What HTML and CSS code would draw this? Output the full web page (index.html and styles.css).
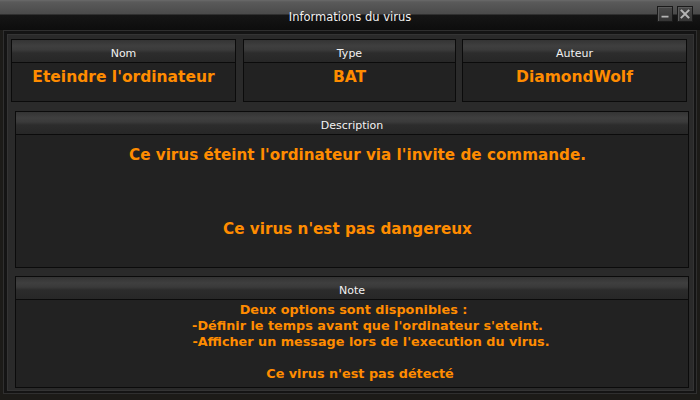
FILE: index.html
```html
<!DOCTYPE html>
<html lang="fr">
<head>
<meta charset="utf-8">
<title>Informations du virus</title>
<link rel="stylesheet" href="styles.css">
</head>
<body>
<div class="window">
  <div class="titlebar">
    <div class="spacer"></div>
    <div class="title">Informations du virus</div>
    <div class="controls">
      <div class="wbtn">
        <svg width="16" height="16" viewBox="0 0 16 16"><rect x="4" y="10" width="8" height="2" fill="#b5b5b5"/></svg>
      </div>
      <div class="wbtn">
        <svg width="16" height="16" viewBox="0 0 16 16"><path d="M4 4 L12 12 M12 4 L4 12" stroke="#b5b5b5" stroke-width="2.2" stroke-linecap="square"/></svg>
      </div>
    </div>
  </div>
  <div class="frame">
    <div class="inner">
      <div class="cards">
        <div class="card card-wide">
          <div class="head">Nom</div>
          <div class="card-body">Eteindre l'ordinateur</div>
        </div>
        <div class="card card-mid">
          <div class="head">Type</div>
          <div class="card-body">BAT</div>
        </div>
        <div class="card card-wide card-last">
          <div class="head">Auteur</div>
          <div class="card-body">DiamondWolf</div>
        </div>
      </div>
      <div class="panel desc">
        <div class="head">Description</div>
        <div class="desc-body">
          <p class="d1">Ce virus éteint l'ordinateur via l'invite de commande.</p>
          <p class="d2">Ce virus n'est pas dangereux</p>
        </div>
      </div>
      <div class="panel note">
        <div class="head">Note</div>
        <div class="note-body">
          <p class="n1">Deux options sont disponibles :</p>
          <p class="n2">-Définir le temps avant que l'ordinateur s'eteint.</p>
          <p class="n3">-Afficher un message lors de l'execution du virus.</p>
          <p class="n4">&nbsp;</p>
          <p class="n5">Ce virus n'est pas détecté</p>
        </div>
      </div>
    </div>
  </div>
</div>
</body>
</html>
```
FILE: styles.css
```css
html, body {
  margin: 0;
  padding: 0;
  background: #1c1b18;
  width: 700px;
  height: 400px;
  overflow: hidden;
  font-family: "DejaVu Sans", sans-serif;
}
.window {
  width: 700px;
  height: 400px;
}
.titlebar {
  height: 30px;
  display: grid;
  grid-template-columns: 1fr auto 1fr;
  align-items: start;
  background: linear-gradient(#6a6a6a 0px, #5a5a5a 2px, #4a4a4a 14px, #151515 15px, #0d0d0d 30px);
}
.title {
  color: #f0f0f0;
  font-size: 11.5px;
  line-height: 14px;
  padding-top: 10px;
}
.controls {
  display: flex;
  justify-content: flex-end;
  gap: 4px;
  padding: 6px 7px 0 0;
}
.wbtn {
  width: 14px;
  height: 14px;
  border: 1px solid #1a1a1a;
  background: linear-gradient(#484848, #353535);
  box-shadow: inset 1px 1px 0 #5a5a5a;
  display: flex;
  align-items: center;
  justify-content: center;
}
.wbtn svg {
  display: block;
  width: 14px;
  height: 14px;
}
.frame {
  margin-left: 3px;
  width: 687px;
  border: 1px solid #2f2f2f;
  background: #141414;
  padding: 3px 2px 2px 3px;
}
.inner {
  border: 1px solid #343434;
  background: #2a2a2a;
  padding: 4px 3px 2px 3px;
}
.cards {
  display: flex;
  height: 63px;
}
.card {
  box-sizing: border-box;
  border: 1px solid #0b0b0b;
  background: #222222;
  display: flex;
  flex-direction: column;
}
.card-wide { width: 225px; }
.card-mid { width: 213px; margin: 0 6px 0 7px; }
.head {
  box-sizing: content-box;
  height: 17px;
  padding-top: 5px;
  border-bottom: 1px solid #0b0b0b;
  background: linear-gradient(#343434 0px, #3f3f3f 6px, #3a3a3a 10px, #2c2c2c 13px, #272727 22px);
  color: #f2f2f2;
  font-size: 11px;
  line-height: 17px;
  text-align: center;
}
.card-body {
  height: 38px;
  color: #ff8c00;
  font-weight: bold;
  font-size: 15.5px;
  line-height: 18px;
  text-align: center;
  padding-top: 5px;
  box-sizing: border-box;
}
.panel {
  border: 1px solid #0b0b0b;
  background: #222222;
  margin: 9px 1px 0 4px;
}
.desc-body {
  height: 132px;
  box-sizing: border-box;
  padding-top: 11px;
  color: #ff8c00;
  font-weight: bold;
  font-size: 15.2px;
  line-height: 18px;
  text-align: center;
}
.desc-body p { margin: 0; }
.desc-body .d1 { padding-left: 11px; }
.desc-body .d2 { margin-top: 56px; padding-right: 9px; }
.note { margin-top: 8px; }
.note-body {
  height: 87px;
  box-sizing: border-box;
  padding-top: 2px;
  color: #ff8c00;
  font-weight: bold;
  font-size: 12.8px;
  line-height: 16px;
  text-align: center;
}
.note-body p { margin: 0; }
.note-body .n1 { padding-left: 3px; }
.note-body .n2 { padding-left: 31px; }
.note-body .n3 { padding-left: 38px; }
.note-body .n5 { padding-left: 16px; }
```
